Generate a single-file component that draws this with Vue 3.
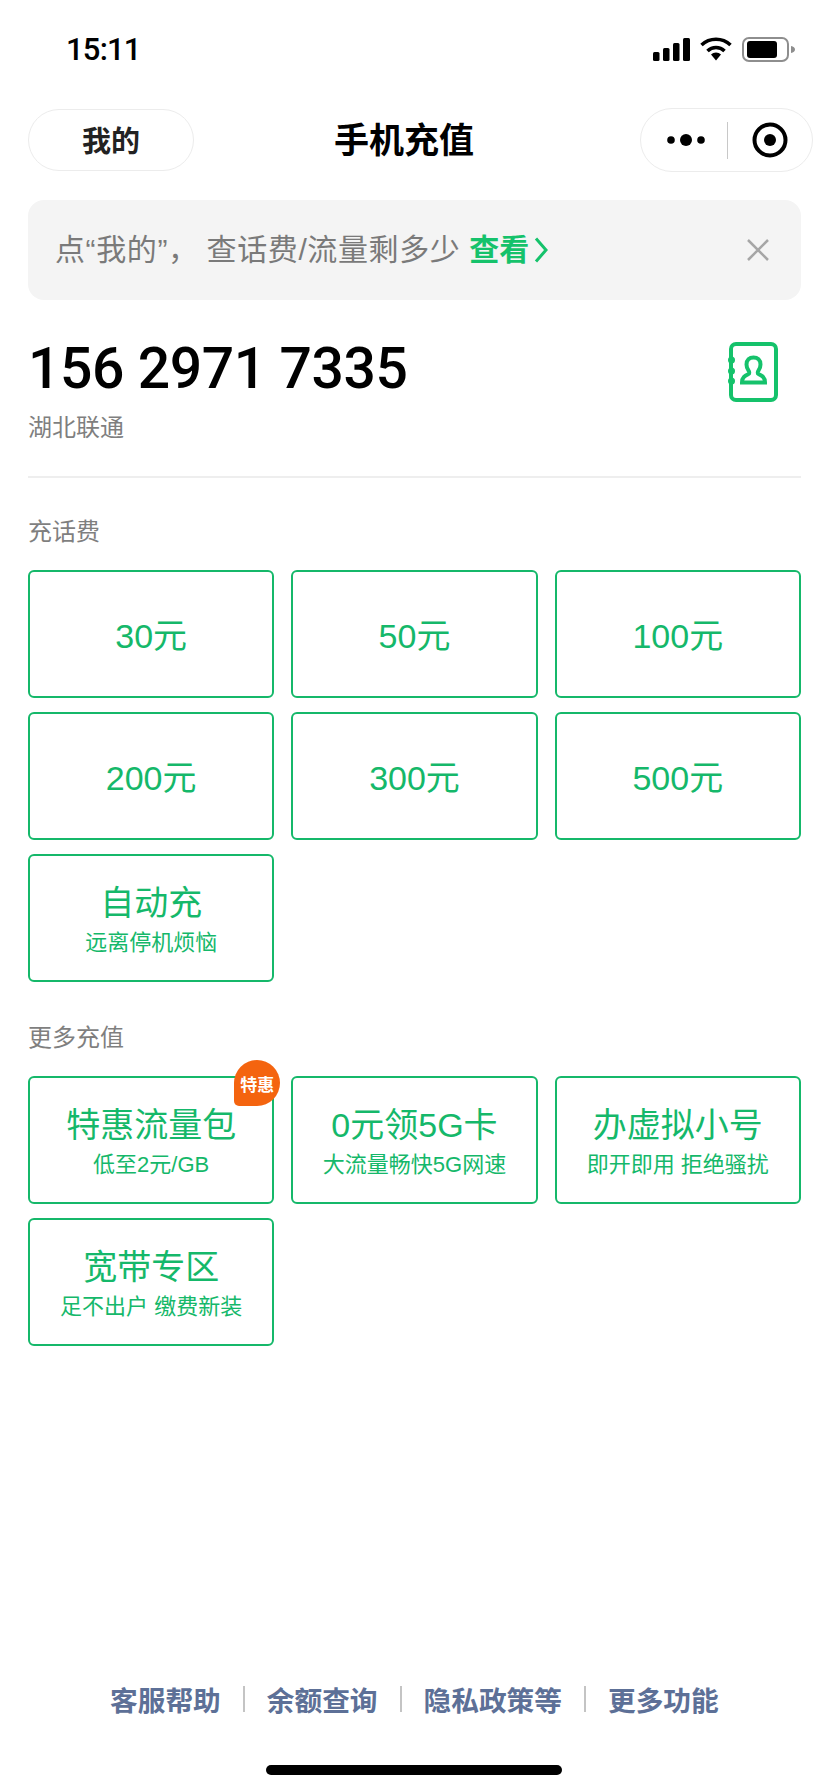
<template>
  <div class="page">
    <div class="status">
      <span class="time">15:11</span>
      <div class="status__icons">
        <svg width="37" height="23" viewBox="0 0 37 23" fill="#000">
          <rect x="0" y="14" width="6.500" height="9" rx="1.500" />
          <rect x="10" y="10" width="6.500" height="13" rx="1.500" />
          <rect x="20" y="5" width="6.500" height="18" rx="1.500" />
          <rect x="30" y="0" width="7" height="23" rx="1.500" />
        </svg>
        <svg class="status__wifi" width="32" height="24" viewBox="0 0 32 24" fill="none" stroke="#000" stroke-width="3.500">
          <path d="M1.500 8a21 21 0 0 1 29 0" />
          <path d="M7.500 14a12 12 0 0 1 17 0" />
          <path d="M11 17.500 16 23.500l5-6a7 7 0 0 0-10 0z" fill="#000" stroke="none" />
        </svg>
        <svg class="status__battery" width="53" height="25" viewBox="0 0 53 25">
          <rect x="1" y="1" width="45" height="23" rx="6" fill="none" stroke="#8e8e8e" stroke-width="2" />
          <rect x="5" y="4" width="30" height="17" rx="3" fill="#000" />
          <path d="M49 9c2.500.5 4 1.500 4 3.500s-1.500 3-4 3.500z" fill="#8e8e8e" />
        </svg>
      </div>
    </div>

    <header class="nav">
      <div class="nav__mine">我的</div>
      <h1 class="nav__title">手机充值</h1>
      <div class="capsule">
        <svg width="38" height="14" viewBox="0 0 38 14" fill="#000">
          <circle cx="4" cy="7" r="3.800" />
          <circle cx="19" cy="7" r="6" />
          <circle cx="34" cy="7" r="3.800" />
        </svg>
        <span class="capsule__line"></span>
        <svg width="36" height="36" viewBox="0 0 36 36">
          <circle cx="18" cy="18" r="15.500" fill="none" stroke="#000" stroke-width="4" />
          <circle cx="18" cy="18" r="6" fill="#000" />
        </svg>
      </div>
    </header>

    <div class="tip">
      <p class="tip__text">点“我的”<span class="tip__comma">，</span>查话费/流量剩多少 <b class="tip__link">查看</b></p>
      <svg class="tip__arrow" width="14" height="26" viewBox="0 0 14 26" fill="none" stroke="#15c26b" stroke-width="3">
        <path d="M2 1.500 12 13 2 24.500" />
      </svg>
      <svg class="tip__close" width="24" height="24" viewBox="0 0 24 24" fill="none" stroke="#a6a6a6" stroke-width="2.500">
        <path d="M2 2l20 20M22 2 2 22" />
      </svg>
    </div>

    <section class="phone">
      <div>
        <div class="phone__number">156 2971 7335</div>
        <div class="phone__area">湖北联通</div>
      </div>
      <svg class="phone__book" width="52" height="62" viewBox="0 0 52 62" fill="none" stroke="#15c26b" stroke-width="4">
        <rect x="3" y="3" width="45" height="56" rx="5" />
        <path d="M14 41.500c0-5.500 3.500-7 6.500-8.500 1-.5 1-2 0-3.500-1.500-2-2-3.500-2-6 0-4.500 3-7 7-7s7 2.500 7 7c0 2.500-.5 4-2 6-1 1.500-1 3 0 3.500 3 1.500 6.500 3 6.500 8.500z" />
        <circle cx="3.500" cy="19" r="3.500" fill="#15c26b" stroke="none" />
        <circle cx="3.500" cy="30" r="3.500" fill="#15c26b" stroke="none" />
        <circle cx="3.500" cy="40" r="3.500" fill="#15c26b" stroke="none" />
      </svg>
    </section>

    <h2 class="label label--first">充话费</h2>
    <div class="grid">
      <div v-for="item in recharge" :key="item.title" class="card">
        <div class="card__title">{{ item.title }}</div>
        <div v-if="item.sub" class="card__sub">{{ item.sub }}</div>
      </div>
    </div>

    <h2 class="label label--more">更多充值</h2>
    <div class="grid">
      <div v-for="item in more" :key="item.title" class="card">
        <div class="card__title">{{ item.title }}</div>
        <div class="card__sub">{{ item.sub }}</div>
        <span v-if="item.badge" class="card__badge">{{ item.badge }}</span>
      </div>
    </div>

    <footer class="links">
      <template v-for="(link, i) in links" :key="link">
        <span v-if="i" class="links__line"></span>
        <span class="links__item">{{ link }}</span>
      </template>
    </footer>
    <div class="home-bar"></div>
  </div>
</template>

<script setup>
const recharge = [
  { title: '30元' },
  { title: '50元' },
  { title: '100元' },
  { title: '200元' },
  { title: '300元' },
  { title: '500元' },
  { title: '自动充', sub: '远离停机烦恼' }
];

const more = [
  { title: '特惠流量包', sub: '低至2元/GB', badge: '特惠' },
  { title: '0元领5G卡', sub: '大流量畅快5G网速' },
  { title: '办虚拟小号', sub: '即开即用 拒绝骚扰' },
  { title: '宽带专区', sub: '足不出户 缴费新装' }
];

const links = ['客服帮助', '余额查询', '隐私政策等', '更多功能'];
</script>

<style>
html,
body {
  margin: 0;
  background: #fff;
}
</style>

<style scoped>
.page {
  position: relative;
  width: 828px;
  height: 1792px;
  overflow: hidden;
  background: #fff;
  font-family: "Liberation Sans", "Noto Sans CJK SC", sans-serif;
}

.status {
  display: flex;
  align-items: center;
  justify-content: space-between;
  height: 50px;
  padding: 24px 33px 0 66px;
}

.time {
  font-family: Roboto, "Liberation Sans", sans-serif;
  font-size: 31px;
  font-weight: 500;
  letter-spacing: -0.8px;
  color: #000;
}

.status__icons {
  display: flex;
  align-items: center;
}

.status__wifi {
  margin-left: 10px;
}

.status__battery {
  margin-left: 10px;
}

.nav {
  position: relative;
  display: flex;
  align-items: center;
  justify-content: space-between;
  height: 64px;
  margin-top: 34px;
  padding: 0 15px 0 28px;
}

.nav__mine {
  display: flex;
  align-items: center;
  justify-content: center;
  width: 166px;
  height: 62px;
  padding-bottom: 3px;
  box-sizing: border-box;
  border: 1px solid #ececec;
  border-radius: 31px;
  font-size: 29px;
  font-weight: 700;
  color: #222;
}

.nav__title {
  position: absolute;
  left: 0;
  width: 808px;
  top: 12.500px;
  margin: 0;
  text-align: center;
  font-size: 35px;
  line-height: 40px;
  font-weight: 700;
  color: #000;
  pointer-events: none;
}

.capsule {
  display: flex;
  align-items: center;
  width: 173px;
  height: 64px;
  padding: 0 0 0 26px;
  box-sizing: border-box;
  border: 1px solid #ececec;
  border-radius: 32px;
}

.capsule__line {
  width: 1px;
  height: 37px;
  margin: 0 24px 0 22px;
  background: #c8c8c8;
}

.tip {
  position: relative;
  display: flex;
  align-items: center;
  height: 100px;
  margin: 28px 27px 0 28px;
  padding-left: 27px;
  border-radius: 16px;
  background: #f4f4f4;
}

.tip__text {
  margin: 0;
  font-size: 30px;
  line-height: 40px;
  letter-spacing: 0.6px;
  color: #7a7a7a;
  white-space: nowrap;
}

.tip__comma {
  margin-right: 8px;
}

.tip__link {
  color: #15c26b;
  font-weight: 700;
  letter-spacing: 0;
}

.tip__arrow {
  margin-left: 5px;
}

.tip__close {
  position: absolute;
  right: 31px;
  top: 38px;
}

.phone {
  display: flex;
  justify-content: space-between;
  align-items: flex-start;
  height: 138px;
  margin: 38px 27px 0 28px;
  border-bottom: 2px solid #eee;
}

.phone__number {
  font-family: Roboto, "Liberation Sans", sans-serif;
  font-size: 57px;
  line-height: 62px;
  font-weight: 500;
  letter-spacing: -0.4px;
  color: #000;
}

.phone__area {
  margin-top: 12px;
  font-size: 24px;
  line-height: 32px;
  color: #7f7f7f;
}

.phone__book {
  margin: 3px 21px 0 0;
}

.label {
  margin: 0 28px;
  font-size: 24px;
  line-height: 32px;
  font-weight: 400;
  color: #7f7f7f;
}

.label--first {
  margin-top: 38px;
  margin-bottom: 22px;
}

.label--more {
  margin-top: 40px;
  margin-bottom: 22px;
}

.grid {
  display: grid;
  grid-template-columns: repeat(3, 1fr);
  gap: 14px 17px;
  margin: 0 27px 0 28px;
}

.card {
  position: relative;
  display: flex;
  flex-direction: column;
  align-items: center;
  justify-content: center;
  height: 128px;
  padding-top: 4px;
  box-sizing: border-box;
  border: 2px solid #15b86a;
  border-radius: 6px;
  color: #15b86a;
}

.card__title {
  font-size: 34px;
  line-height: 46px;
  white-space: nowrap;
}

.card__sub {
  font-size: 22px;
  line-height: 34px;
  white-space: nowrap;
}

.card__badge {
  position: absolute;
  top: -18px;
  right: -8px;
  display: flex;
  align-items: center;
  justify-content: center;
  width: 46px;
  height: 46px;
  border-radius: 23px 23px 23px 5px;
  background: #f4640f;
  color: #fff;
  font-size: 17px;
  font-weight: 700;
}

.links {
  position: absolute;
  left: 110px;
  top: 1679px;
  display: flex;
  align-items: center;
  height: 40px;
}

.links__item {
  font-size: 27.700px;
  font-weight: 700;
  color: #5d7097;
  white-space: nowrap;
}

.links__line {
  width: 2px;
  height: 26px;
  margin: 0 22px;
  background: #c4c4c4;
}

.home-bar {
  position: absolute;
  left: 266px;
  top: 1765px;
  width: 296px;
  height: 10px;
  border-radius: 5px;
  background: #000;
}
</style>
